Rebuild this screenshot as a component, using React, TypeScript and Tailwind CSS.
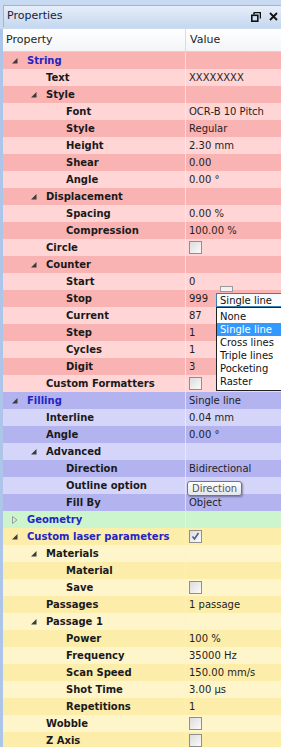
import React from 'react';

type Tint = 'pink' | 'blue' | 'green' | 'yellow';

type Row = {
  label: string;
  value?: string;
  level: number;
  tint: Tint;
  expander?: 'open' | 'closed';
  section?: boolean;
  check?: 'off' | 'on';
};

const rows: Row[] = [
  { label: 'String', level: 0, tint: 'pink', expander: 'open', section: true },
  { label: 'Text', value: 'XXXXXXXX', level: 1, tint: 'pink' },
  { label: 'Style', level: 1, tint: 'pink', expander: 'open' },
  { label: 'Font', value: 'OCR-B 10 Pitch', level: 2, tint: 'pink' },
  { label: 'Style', value: 'Regular', level: 2, tint: 'pink' },
  { label: 'Height', value: '2.30 mm', level: 2, tint: 'pink' },
  { label: 'Shear', value: '0.00', level: 2, tint: 'pink' },
  { label: 'Angle', value: '0.00 °', level: 2, tint: 'pink' },
  { label: 'Displacement', level: 1, tint: 'pink', expander: 'open' },
  { label: 'Spacing', value: '0.00 %', level: 2, tint: 'pink' },
  { label: 'Compression', value: '100.00 %', level: 2, tint: 'pink' },
  { label: 'Circle', level: 1, tint: 'pink', check: 'off' },
  { label: 'Counter', level: 1, tint: 'pink', expander: 'open' },
  { label: 'Start', value: '0', level: 2, tint: 'pink' },
  { label: 'Stop', value: '999', level: 2, tint: 'pink' },
  { label: 'Current', value: '87', level: 2, tint: 'pink' },
  { label: 'Step', value: '1', level: 2, tint: 'pink' },
  { label: 'Cycles', value: '1', level: 2, tint: 'pink' },
  { label: 'Digit', value: '3', level: 2, tint: 'pink' },
  { label: 'Custom Formatters', level: 1, tint: 'pink', check: 'off' },
  { label: 'Filling', value: 'Single line', level: 0, tint: 'blue', expander: 'open', section: true },
  { label: 'Interline', value: '0.04 mm', level: 1, tint: 'blue' },
  { label: 'Angle', value: '0.00 °', level: 1, tint: 'blue' },
  { label: 'Advanced', level: 1, tint: 'blue', expander: 'open' },
  { label: 'Direction', value: 'Bidirectional', level: 2, tint: 'blue' },
  { label: 'Outline option', level: 2, tint: 'blue' },
  { label: 'Fill By', value: 'Object', level: 2, tint: 'blue' },
  { label: 'Geometry', level: 0, tint: 'green', expander: 'closed', section: true },
  { label: 'Custom laser parameters', level: 0, tint: 'yellow', expander: 'open', section: true, check: 'on' },
  { label: 'Materials', level: 1, tint: 'yellow', expander: 'open' },
  { label: 'Material', level: 2, tint: 'yellow' },
  { label: 'Save', level: 2, tint: 'yellow', check: 'off' },
  { label: 'Passages', value: '1 passage', level: 1, tint: 'yellow' },
  { label: 'Passage 1', level: 1, tint: 'yellow', expander: 'open' },
  { label: 'Power', value: '100 %', level: 2, tint: 'yellow' },
  { label: 'Frequency', value: '35000 Hz', level: 2, tint: 'yellow' },
  { label: 'Scan Speed', value: '150.00 mm/s', level: 2, tint: 'yellow' },
  { label: 'Shot Time', value: '3.00 µs', level: 2, tint: 'yellow' },
  { label: 'Repetitions', value: '1', level: 2, tint: 'yellow' },
  { label: 'Wobble', level: 1, tint: 'yellow', check: 'off' },
  { label: 'Z Axis', level: 1, tint: 'yellow', check: 'off' },
];

const tints: Record<Tint, [string, string]> = {
  pink: ['bg-[#fab3b3]', 'bg-[#ffd5d5]'],
  blue: ['bg-[#b3b3f0]', 'bg-[#d5d5fa]'],
  green: ['bg-[#cdf5cd]', 'bg-[#cdf5cd]'],
  yellow: ['bg-[#fcedaa]', 'bg-[#fff5cb]'],
};

const indent = ['pl-[24px]', 'pl-[43px]', 'pl-[63px]'];

function Expander({ state }: { state: 'open' | 'closed' }) {
  if (state === 'closed') {
    return (
      <svg width="6" height="8" viewBox="0 0 6 8" className="absolute left-[-15px] top-[3px]">
        <path d="M0.5 0.5 L5 4 L0.5 7.5 Z" fill="none" stroke="#9a9a9a" strokeWidth="1" />
      </svg>
    );
  }
  return (
    <svg width="6" height="6" viewBox="0 0 6 6" className="absolute left-[-15px] top-[4px]">
      <path d="M5.5 0 L5.5 5.5 L0 5.5 Z" fill="#3c3c3c" />
    </svg>
  );
}

function Checkbox({ checked }: { checked?: boolean }) {
  return (
    <span className="inline-flex h-[13px] w-[13px] items-center justify-center border border-[#8e8f8f] bg-gradient-to-br from-[#dcdcdc] to-[#fbfbfb]">
      {checked && (
        <svg width="9" height="9" viewBox="0 0 9 9">
          <path d="M1.5 4.5 L3.5 7 L7.5 1" fill="none" stroke="#4c5e8a" strokeWidth="1.6" />
        </svg>
      )}
    </span>
  );
}

function PropRow({ row, index }: { row: Row; index: number }) {
  const bg = tints[row.tint][index % 2 === 0 ? 0 : 1];
  return (
    <div className={`grid h-[17px] grid-cols-[182px_1fr] ${bg}`}>
      <div className={`relative flex items-center whitespace-nowrap text-[10px] leading-[14px] ${indent[row.level]}`}>
        <span className="relative">
          {row.expander && <Expander state={row.expander} />}
          <span className={`font-bold ${row.section ? 'text-[#2424c4]' : 'text-[#1a1a1a]'}`}>{row.label}</span>
        </span>
      </div>
      <div className="flex items-center border-l border-[#f4eeee]/70 pl-[3px] text-[10px] leading-[14px] text-[#1e1e1e] whitespace-nowrap">
        {row.check ? <Checkbox checked={row.check === 'on'} /> : row.value}
      </div>
    </div>
  );
}

function Dropdown() {
  const items = ['None', 'Single line', 'Cross lines', 'Triple lines', 'Pocketing', 'Raster'];
  return (
    <div className="absolute left-[216px] top-[293px] w-[70px] text-[10px] leading-[13px]">
      <div className="flex h-[14px] items-center border border-[#3c7fb1] bg-gradient-to-b from-[#f2f9ff] to-[#ffffff] pl-[3px] text-[#111]">
        Single line
      </div>
      <div className="flex flex-col border border-[#222] bg-white py-[2px]">
        {items.map((item) => (
          <div
            key={item}
            className={`flex h-[13px] items-center pl-[3px] ${item === 'Single line' ? 'bg-[#3399ff] text-white' : 'text-[#111]'}`}
          >
            {item}
          </div>
        ))}
      </div>
    </div>
  );
}

export default function App() {
  return (
    <div className="relative h-[747px] w-[281px] overflow-hidden bg-[#c8daf1] font-['DejaVu_Sans',sans-serif]">
      <div className="pt-[5px] pl-[3px]">
        <div className="flex h-[22px] items-center justify-between border-t border-l border-[#9fb5d4] bg-gradient-to-b from-[#e6eefa] to-[#c6d8ef] pl-[3px] pr-[3px]">
          <span className="text-[11px] text-[#15233a]">Properties</span>
          <div className="flex items-center gap-[8px]">
            <svg width="10" height="10" viewBox="0 0 10 10">
              <path d="M3 0.5 H9.5 V6.5 M3 0.5 V2.5" fill="none" stroke="#111" strokeWidth="1.6" />
              <rect x="0.8" y="3.3" width="6" height="5.9" fill="none" stroke="#111" strokeWidth="1.6" />
            </svg>
            <svg width="9" height="9" viewBox="0 0 9 9">
              <path d="M1 1 L8 8 M8 1 L1 8" stroke="#111" strokeWidth="1.8" />
            </svg>
          </div>
        </div>
      </div>
      <div className="mt-[2px] border-l-[3px] border-[#adc5e9] bg-white">
        <div className="grid h-[23px] grid-cols-[182px_1fr] border-b border-[#d5d5d5] bg-gradient-to-b from-[#ffffff] to-[#f3f4f6]">
          <div className="flex items-center pl-[3px] text-[11px] text-[#1e1e1e]">Property</div>
          <div className="flex items-center border-l border-[#d9dde2] pl-[4px] text-[11px] text-[#1e1e1e]">Value</div>
        </div>
        {rows.map((row, i) => (
          <PropRow key={i} row={row} index={i} />
        ))}
      </div>
      <span className="absolute left-[220px] top-[286px] h-[6px] w-[13px] border border-[#9a9a9a] bg-[#f2f2f2]" />
      <Dropdown />
      <div className="absolute left-[187px] top-[481px] flex h-[15px] items-center rounded-[3px] border border-[#767676] bg-gradient-to-b from-[#ffffff] to-[#e4e5ee] px-[4px] text-[10px] text-[#575757] shadow-[1px_1px_2px_rgba(0,0,0,0.35)]">
        Direction
      </div>
    </div>
  );
}
